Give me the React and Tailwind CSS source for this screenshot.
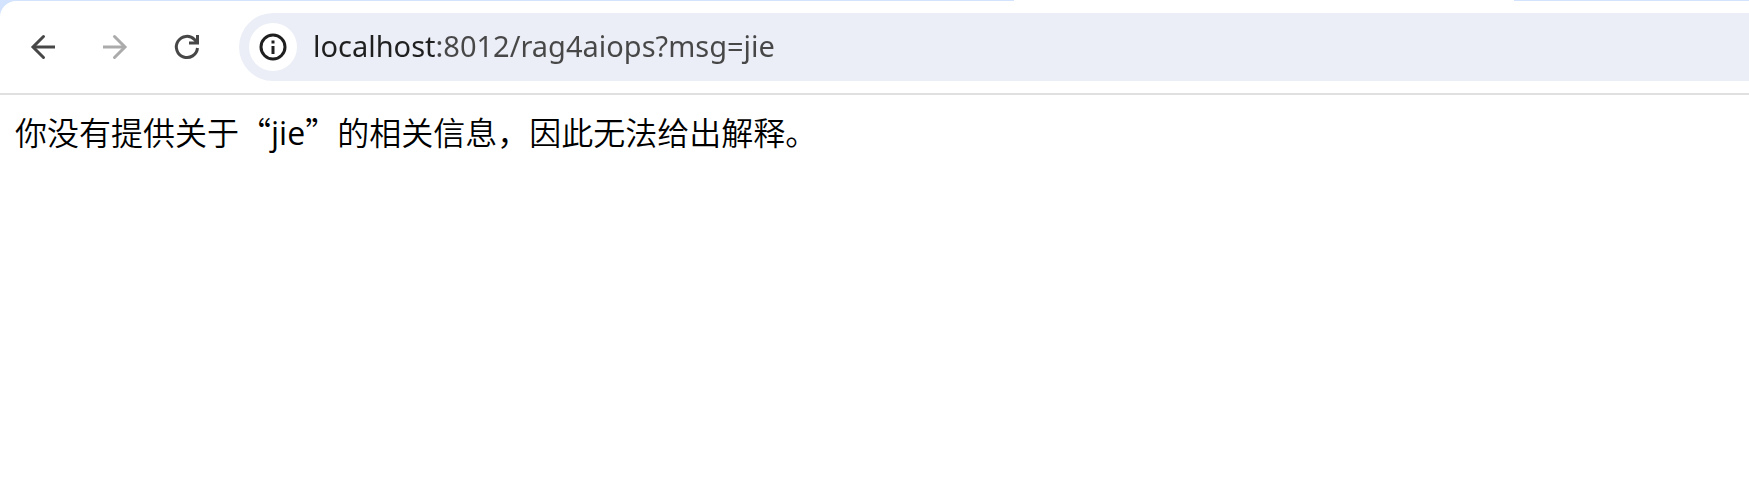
import React from 'react';

const iconProps = {
  width: 36,
  height: 36,
  viewBox: '0 0 36 36',
  fill: 'none',
  stroke: 'currentColor',
  strokeWidth: 3,
  'aria-hidden': true,
};

function BackIcon() {
  return (
    <svg {...iconProps}>
      <path d="M30 18H8" />
      <path d="M18.5 7.5L8 18l10.5 10.5" strokeLinecap="round" />
    </svg>
  );
}

function ForwardIcon() {
  return (
    <svg {...iconProps}>
      <path d="M6 18h22" />
      <path d="M17.5 7.5L28 18 17.5 28.5" strokeLinecap="round" />
    </svg>
  );
}

function ReloadIcon() {
  return (
    <svg {...iconProps}>
      <path d="M28.5 19A10.6 10.6 0 1 1 25.5 10.5L28 13.5" />
      <path d="M28.5 6v8H20" />
    </svg>
  );
}

function InfoIcon() {
  return (
    <svg {...iconProps}>
      <circle cx="18" cy="18" r="12" />
      <path d="M18 17v8M18 11.5v3" />
    </svg>
  );
}

function Toolbar() {
  return (
    <header className="bg-[#d3e3fd]">
      {/* bottom edge of the active tab */}
      <div className="h-px pl-[58%]">
        <div className="h-px w-[500px] bg-white" />
      </div>
      <div className="flex items-center rounded-tl-2xl border-b-2 border-[#e0e0e0] bg-white py-3 pl-[25px]">
        <nav className="flex gap-9 pr-[34px]">
          <button type="button" aria-label="Back" className="text-[#474747]">
            <BackIcon />
          </button>
          <button type="button" aria-label="Forward" className="text-[#ababab]">
            <ForwardIcon />
          </button>
          <button type="button" aria-label="Reload" className="text-[#474747]">
            <ReloadIcon />
          </button>
        </nav>
        <div className="flex h-[68px] flex-1 items-center gap-4 rounded-l-full bg-[#ebeef7] pl-[10px]">
          <button
            type="button"
            aria-label="View site information"
            className="flex size-12 items-center justify-center rounded-full bg-white text-[#1f1f1f]"
          >
            <InfoIcon />
          </button>
          {/* host is darker than the rest of the address */}
          <input
            type="text"
            aria-label="Address"
            defaultValue="localhost:8012/rag4aiops?msg=jie"
            className="h-12 min-w-0 flex-1 bg-[linear-gradient(to_right,#1f1f1f_123px,#474747_123px)] bg-clip-text pb-1 font-['Noto_Sans',sans-serif] text-[29px] text-transparent caret-black outline-none"
          />
        </div>
      </div>
    </header>
  );
}

export default function App() {
  return (
    <div className="min-h-screen bg-white">
      <Toolbar />
      <main className="px-[15px] py-4 font-['Noto_Sans_CJK_SC',sans-serif] text-[32px] leading-10 font-[350] text-black">
        <p lang="zh-CN">
          你没有提供关于“
          <span className="font-['Open_Sans',sans-serif] font-normal">jie</span>
          ”的相关信息，因此无法给出解释。
        </p>
      </main>
    </div>
  );
}
